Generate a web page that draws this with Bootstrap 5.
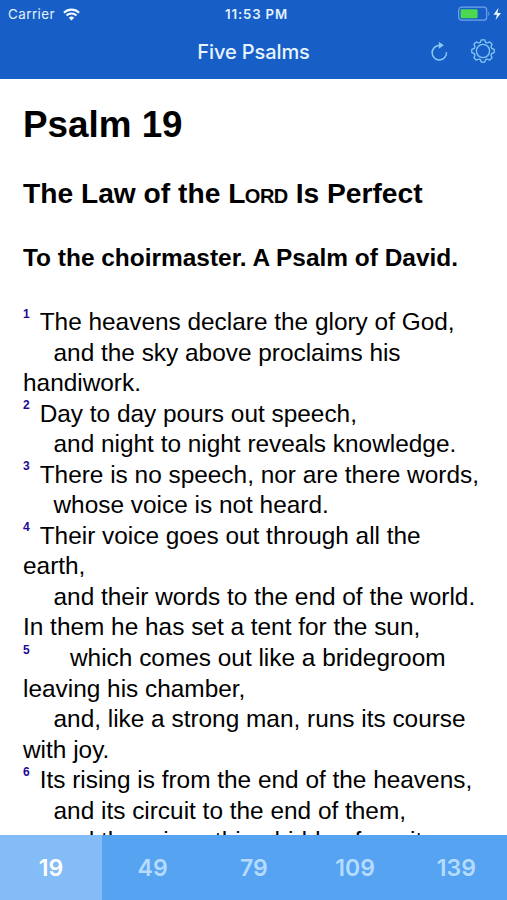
<!DOCTYPE html>
<html lang="en">
<head>
<meta charset="utf-8">
<meta name="viewport" content="width=device-width, initial-scale=1">
<title>Five Psalms</title>
<link href="https://cdn.jsdelivr.net/npm/bootstrap@5.3.0/dist/css/bootstrap.min.css" rel="stylesheet">
<style>
body{font-family:Inter,sans-serif;background:#fff;color:#000}
.app-top{background:#175ec7;height:79px;flex:none}
.status-row{height:28px;padding:0 5px 0 8px;font-size:13.4px;line-height:28px;color:#e4f2ff}
.carrier{letter-spacing:.45px}
.status-time{font-weight:600;letter-spacing:.85px;padding-left:3px;font-size:13.2px}
.title-row{height:51px;color:#e6f4ff}
.app-title{font-size:20px;font-weight:500;line-height:49px;letter-spacing:-.1px}
.nav-icons{padding:0 11px 6px 0}
.nav-gap{gap:21px}
.icon-btn{color:#86c8f6;background:none;border:0;padding:0;line-height:0}
.reader{font-family:"Liberation Sans",Arial,sans-serif;padding:0 0 0 23px;font-size:24.4px;line-height:30.56px;min-height:0}
.reader h1{font-size:36.8px;line-height:44px;font-weight:700;margin:24px 0 0}
.reader h2{font-size:28.2px;line-height:34px;font-weight:700;margin:29px 0 0}
.reader h3{font-size:24.45px;line-height:30px;font-weight:700;margin:33px 0 34px}
.sc{font-variant:small-caps;letter-spacing:-.5px}
.verse-line{height:30.56px;white-space:pre}
.ind{padding-left:30.5px}
.num{display:inline-block;width:16.7px;font-size:12px;font-weight:700;color:#1c0a94;line-height:0;position:relative;top:-12.5px}
.wide{width:47px}
.tabs-bar{height:65px;background:#55a3f1;flex:none}
.tabs-bar a{color:#b5dcff;font-size:23px;font-weight:600;line-height:66px;height:65px;text-decoration:none}
.tabs-bar a.active{background:#83bcf7;color:#fff;flex:0 0 102px}
</style>
</head>
<body>
<div class="d-flex flex-column vh-100 overflow-hidden">
<header class="app-top">
  <div class="status-row row g-0">
    <div class="col d-flex align-items-center"><span class="carrier">Carrier</span>
      <svg class="ms-2" width="17" height="13" viewBox="0 0 17 13" fill="none" stroke="#f3faff" stroke-width="2.1"><path d="M.9 4.700C5.100.6 11.900.6 16.100 4.700M3.500 7.500C6.300 4.900 10.700 4.900 13.500 7.500"/><path d="M5.800 9.700Q8.500 7.500 11.200 9.700L8.500 12.400Z" fill="#f3faff" stroke="none"/></svg>
    </div>
    <div class="col-auto status-time">11:53 PM</div>
    <div class="col d-flex align-items-center justify-content-end">
      <svg width="44" height="16" viewBox="0 0 44 16"><rect x=".7" y="1.200" width="28" height="13" rx="3" fill="none" stroke="#6fa5e9" stroke-width="1.200"/><rect x="2.600" y="3.200" width="17" height="9" rx="1" fill="#4cd850"/><path d="M30.400 5.300q2 2.500 0 5z" fill="#6fa5e9"/><path d="M40.500 1.800L35.500 8.700h3.500l-1.500 5.200L43 6.900h-3.600z" fill="#f3faff"/></svg>
    </div>
  </div>
  <div class="title-row row g-0">
    <div class="col"></div>
    <div class="col-auto app-title">Five Psalms</div>
    <div class="col">
      <div class="nav-icons nav-gap d-flex justify-content-end align-items-center h-100">
        <button class="icon-btn" aria-label="Refresh"><svg width="20" height="22" viewBox="0 0 20 22" fill="none" stroke="currentColor" stroke-width="1.500"><path d="M12 5.500H10.400A7.200 7.200 0 1 0 17.500 12.200"/><path d="M9.800 1.800L14.800 5.300L9.800 8.700Z" fill="currentColor" stroke="none"/></svg></button>
        <button class="icon-btn" aria-label="Settings"><svg width="26" height="26" viewBox="-13 -13 26 26" fill="none" stroke="currentColor" stroke-width="1.300"><circle r="6.600"/><path d="M-2.700-8.600L-1.600-11.200H1.600L2.700-8.600L4.200-8L6.800-9.100L9.100-6.800L8-4.200L8.600-2.700L11.200-1.600V1.600L8.600 2.700L8 4.200L9.100 6.800L6.800 9.100L4.200 8L2.700 8.600L1.600 11.200H-1.600L-2.700 8.600L-4.200 8L-6.800 9.100L-9.100 6.800L-8 4.200L-8.600 2.700L-11.200 1.600V-1.600L-8.600-2.700L-8-4.200L-9.100-6.800L-6.800-9.100L-4.200-8Z" stroke-linejoin="round"/></svg></button>
      </div>
    </div>
  </div>
</header>
<main class="reader flex-fill overflow-hidden">
  <h1>Psalm 19</h1>
  <h2>The Law of the <span class="sc">Lord</span> Is Perfect</h2>
  <h3>To the choirmaster. A Psalm of David.</h3>
  <div class="verse-line"><span class="num">1</span>The heavens declare the glory of God,</div>
  <div class="verse-line ind">and the sky above proclaims his</div>
  <div class="verse-line">handiwork.</div>
  <div class="verse-line"><span class="num">2</span>Day to day pours out speech,</div>
  <div class="verse-line ind">and night to night reveals knowledge.</div>
  <div class="verse-line"><span class="num">3</span>There is no speech, nor are there words,</div>
  <div class="verse-line ind">whose voice is not heard.</div>
  <div class="verse-line"><span class="num">4</span>Their voice goes out through all the</div>
  <div class="verse-line">earth,</div>
  <div class="verse-line ind">and their words to the end of the world.</div>
  <div class="verse-line">In them he has set a tent for the sun,</div>
  <div class="verse-line"><span class="num wide">5</span>which comes out like a bridegroom</div>
  <div class="verse-line">leaving his chamber,</div>
  <div class="verse-line ind">and, like a strong man, runs its course</div>
  <div class="verse-line">with joy.</div>
  <div class="verse-line"><span class="num">6</span>Its rising is from the end of the heavens,</div>
  <div class="verse-line ind">and its circuit to the end of them,</div>
  <div class="verse-line ind">and there is nothing hidden from its</div>
</main>
<nav class="tabs-bar row g-0 text-center">
  <a class="col active" href="#">19</a><a class="col" href="#">49</a><a class="col" href="#">79</a><a class="col" href="#">109</a><a class="col" href="#">139</a>
</nav>
</div>
<script src="https://cdn.jsdelivr.net/npm/bootstrap@5.3.0/dist/js/bootstrap.bundle.min.js"></script>
</body>
</html>
